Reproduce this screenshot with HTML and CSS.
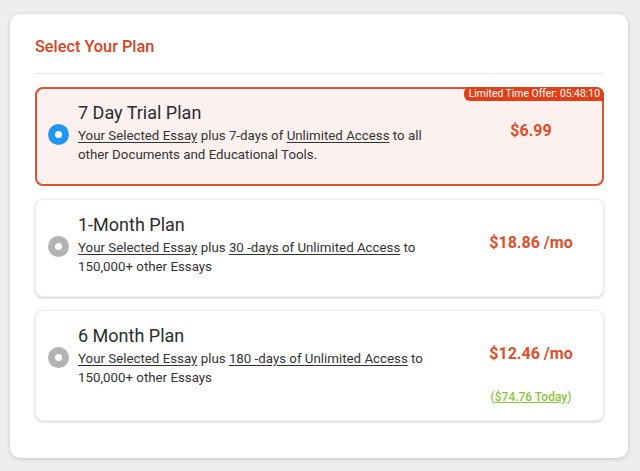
FILE: index.html
```html
<!DOCTYPE html>
<html>
<head>
<meta charset="utf-8">
<link rel="stylesheet" href="styles.css">
</head>
<body>
<div class="panel">
  <h2 class="heading">Select Your Plan</h2>
  <div class="plans">
    <div class="plan selected">
      <div class="badge">Limited Time Offer: 05:48:10</div>
      <div class="info">
        <span class="radio on"></span>
        <div class="text">
          <div class="name">7 Day Trial Plan</div>
          <div class="desc"><u>Your Selected Essay</u> plus 7-days of <u>Unlimited Access</u> to all other Documents and Educational Tools.</div>
        </div>
      </div>
      <div class="price-col"><div class="price">$6.99</div></div>
    </div>
    <div class="plan">
      <div class="info">
        <span class="radio"></span>
        <div class="text">
          <div class="name">1-Month Plan</div>
          <div class="desc"><u>Your Selected Essay</u> plus <u>30 -days of Unlimited Access</u> to 150,000+ other Essays</div>
        </div>
      </div>
      <div class="price-col"><div class="price">$18.86 /mo</div></div>
    </div>
    <div class="plan">
      <div class="info">
        <span class="radio"></span>
        <div class="text">
          <div class="name">6 Month Plan</div>
          <div class="desc"><u>Your Selected Essay</u> plus <u>180 -days of Unlimited Access</u> to 150,000+ other Essays</div>
        </div>
      </div>
      <div class="price-col"><div class="price">$12.46 /mo</div><div class="today">(<u>$74.76 Today</u>)</div></div>
    </div>
  </div>
</div>
</body>
</html>
```
FILE: styles.css
```css
* { box-sizing: border-box; }
html, body { margin: 0; padding: 0; }
body {
  background: #eeeeee;
  font-family: Roboto, "Liberation Sans", Arial, sans-serif;
  color: #333;
  width: 640px;
  height: 471px;
  overflow: hidden;
}
.panel {
  margin: 14px 0 0 10px;
  width: 618px;
  height: 444px;
  background: #fff;
  border-radius: 10px;
  box-shadow: 0 1px 4px rgba(0,0,0,0.18);
  padding: 23px 24px 0 25px;
}
.heading {
  margin: 0;
  font-size: 16.3px;
  font-weight: 500;
  color: #d8431f;
  line-height: 20px;
  padding-bottom: 16px;
  border-bottom: 1px solid #e6e6e6;
}
.plans {
  display: flex;
  flex-direction: column;
  gap: 13px;
  margin-top: 13px;
}
.plan {
  position: relative;
  display: flex;
  align-items: flex-start;
  border-radius: 8px;
  border: 1px solid #efefef;
  background: #fff;
  box-shadow: 0 1px 3px rgba(0,0,0,0.2);
}
.plan.selected {
  border: 2px solid #d95430;
  background: #fdf1ef;
  box-shadow: none;
}
.badge {
  position: absolute;
  top: -2px;
  right: -2px;
  background: #e13f18;
  color: #fff;
  font-size: 10.4px;
  line-height: 14px;
  height: 14px;
  padding: 0 4px 0 5px;
  border-radius: 6px 8px 0 6px;
}
.info {
  flex: 1;
  display: flex;
  align-items: center;
  gap: 9px;
  padding: 13px 0 20px 12px;
}
.selected .info { padding: 12px 0 20px 11px; }
.radio {
  flex: none;
  width: 21px;
  height: 21px;
  border-radius: 50%;
  background: #b3b3b3;
  position: relative;
  margin-top: 4px;
}
.radio::after {
  content: "";
  position: absolute;
  left: 7px;
  top: 7px;
  width: 7px;
  height: 7px;
  border-radius: 50%;
  background: #fff;
}
.radio.on { background: #2196f3; }
.text { width: 373px; }
.name {
  font-size: 18px;
  line-height: 24px;
  color: #2b2b2b;
}
.desc {
  font-size: 13.3px;
  line-height: 19px;
  color: #333;
  padding-top: 1px;
}
.desc u { text-underline-offset: 2px; }
.price-col {
  flex: none;
  width: 144px;
  display: flex;
  flex-direction: column;
  align-items: center;
  padding: 33px 0 16px;
}
.selected .price-col { padding-top: 32px; margin-right: -1px; }
.price {
  font-size: 16px;
  font-weight: 700;
  line-height: 20px;
  color: #df4e29;
}
.today {
  margin-top: 26px;
  font-size: 12px;
  font-weight: 500;
  line-height: 14px;
  color: #8cc43c;
}
.today u { text-underline-offset: 1px; }
```
